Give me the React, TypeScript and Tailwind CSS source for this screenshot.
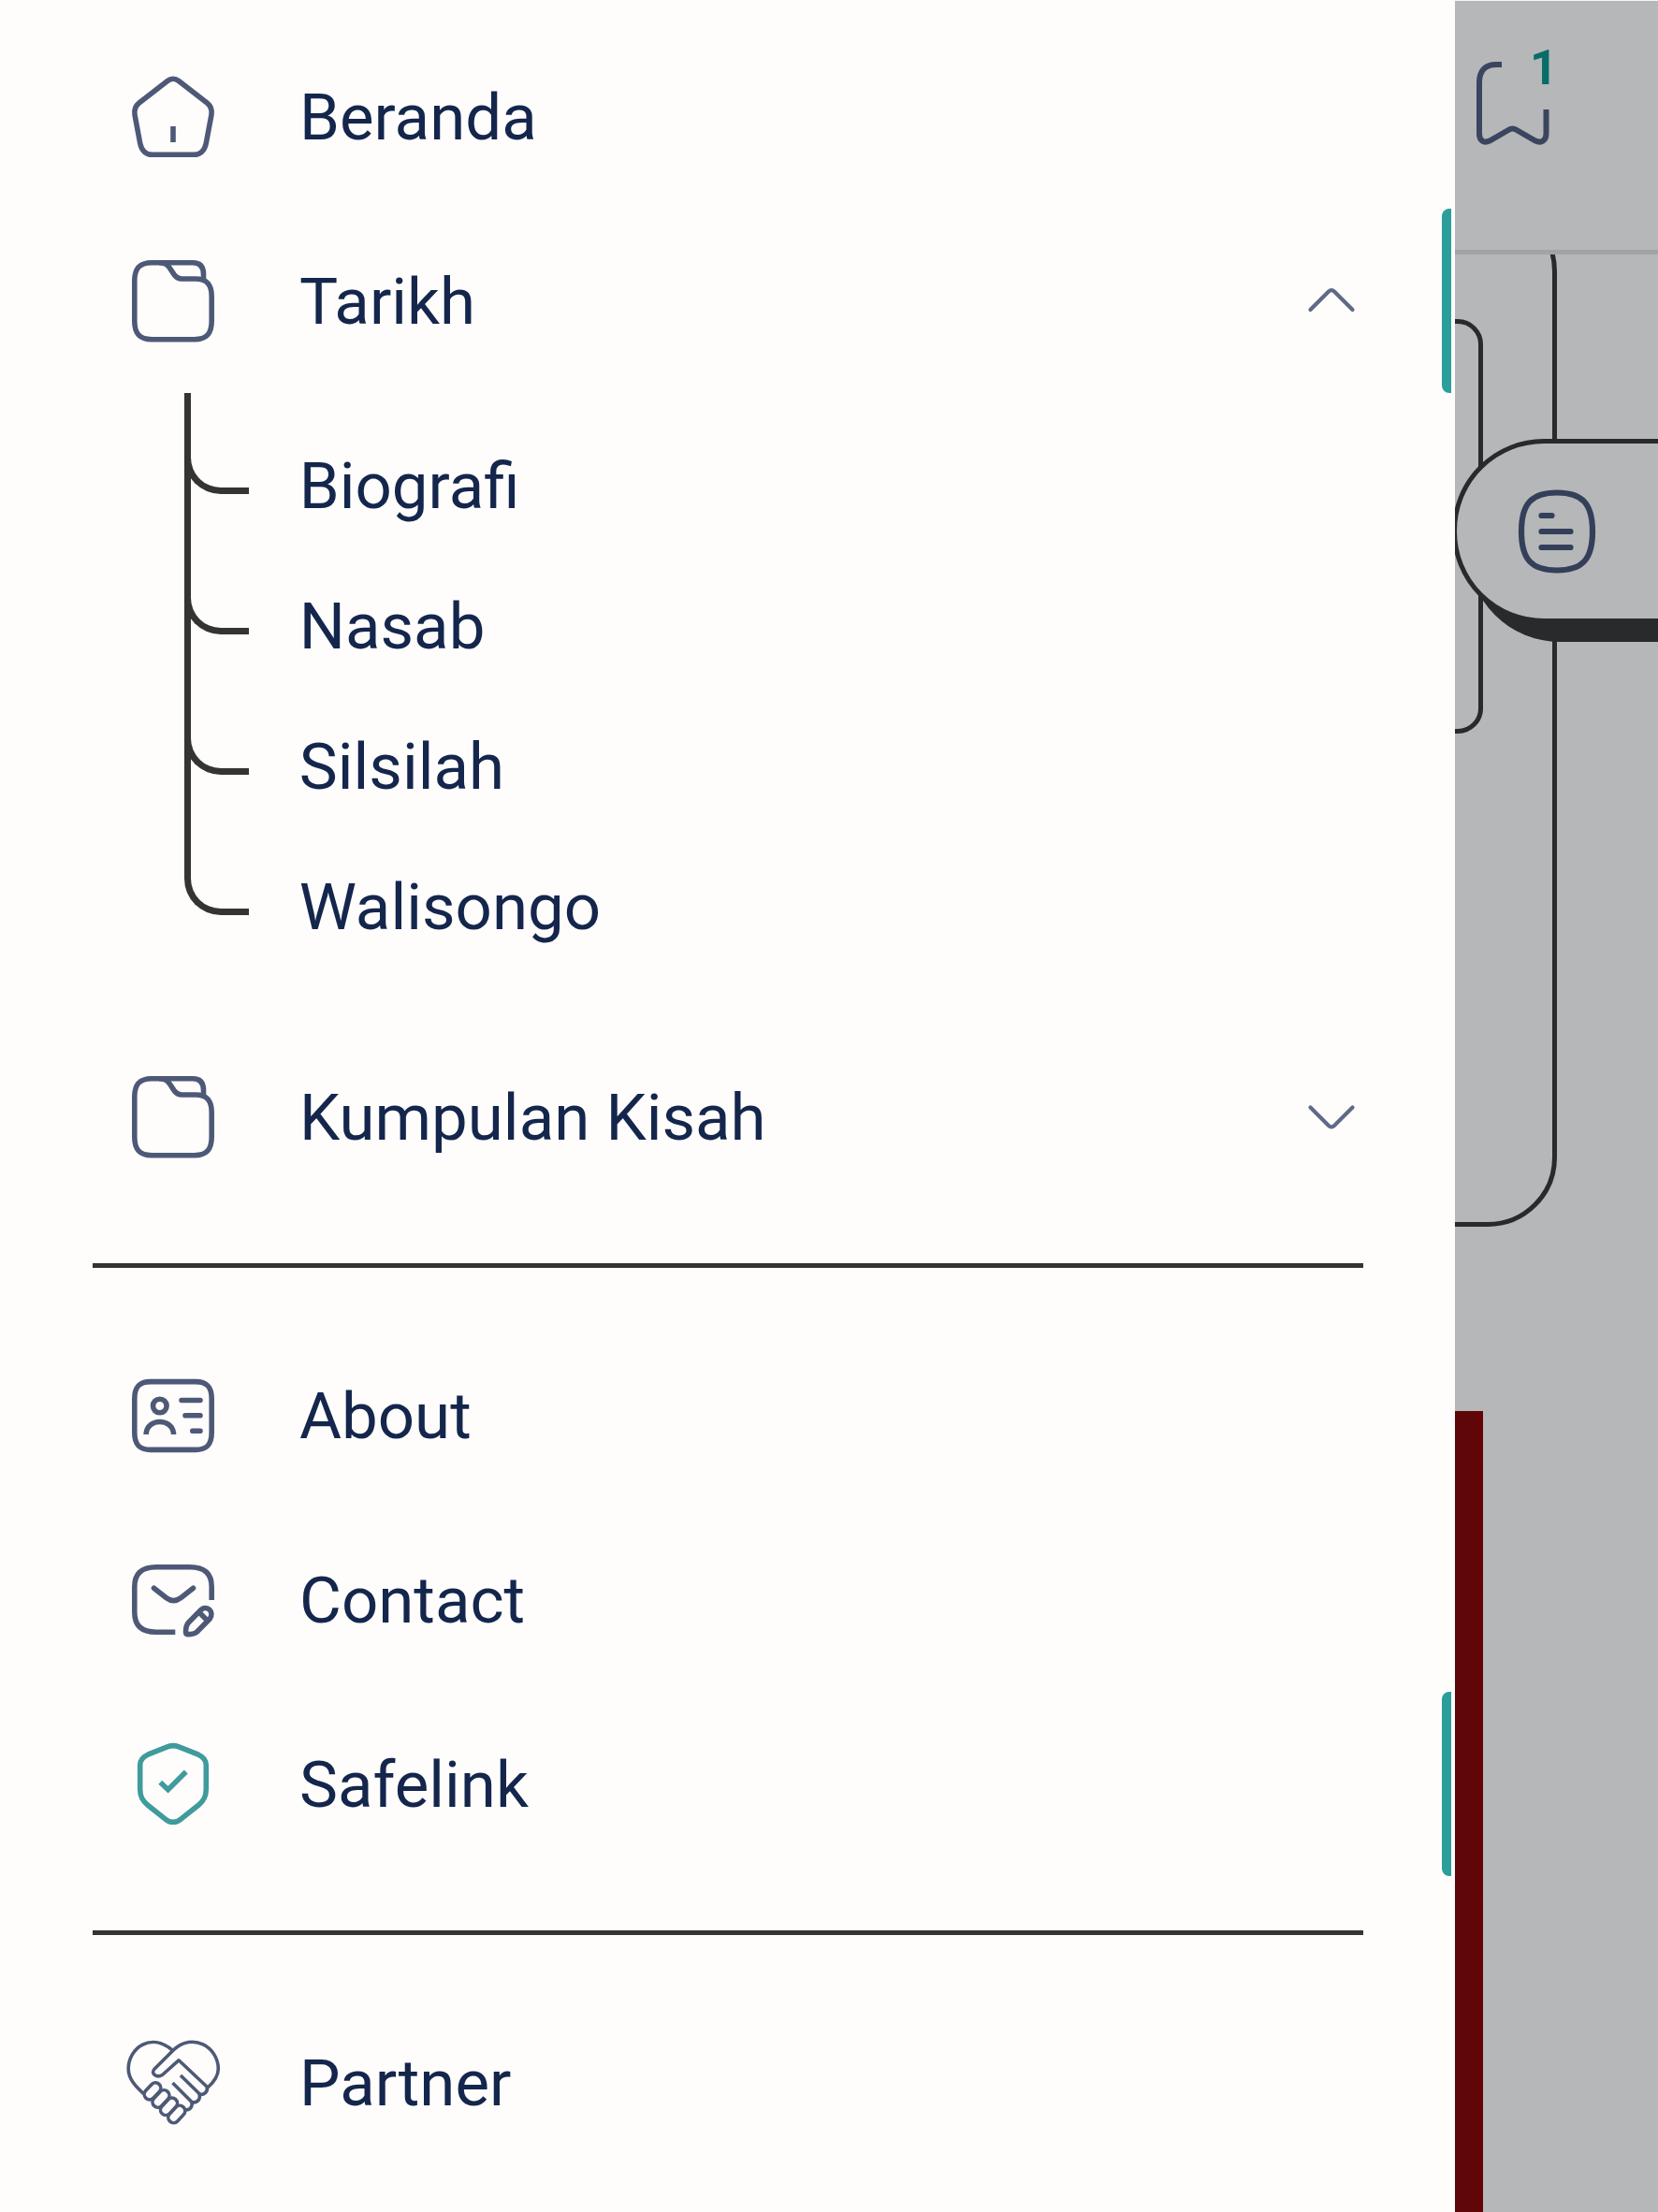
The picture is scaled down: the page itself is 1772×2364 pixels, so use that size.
import type { ReactNode } from "react";

function Icon({ children, color = "text-[#4d5976]", width = 5.6 }: { children: ReactNode; color?: string; width?: number }) {
  return (
    <svg viewBox="0 0 118 118" className={`size-[118px] shrink-0 ${color}`} fill="none" stroke="currentColor" strokeWidth={width}>
      {children}
    </svg>
  );
}

const HomeIcon = () => (
  <Icon>
    <path d="M53 20.5C56.5 17.7 61.5 17.7 65 20.5L95 43.8C98.8 46.8 101 50.5 100 56.5L94.3 87C92.6 95.5 87.5 99.3 81.5 99.3H36.5C30.5 99.3 25.4 95.5 23.7 87L18 56.5C17 50.5 19.2 46.8 23 43.8Z" />
    <path d="M59 69V86" />
  </Icon>
);

const FolderIcon = () => (
  <Icon>
    <path d="M45 17.7H36C23 17.7 17.8 24 17.8 37V80C17.8 93.5 23 99.7 36 99.7H82C95 99.7 100.2 93.5 100.2 80V54C100.2 41 95 35 83 35H68C64.5 35 62.8 34 60.5 31L55.5 23.5C53 19.3 50 17.7 44 17.7" />
    <path d="M44 17.7H80C88 17.7 91.5 22 91.5 30V37" />
  </Icon>
);

const IdCardIcon = () => (
  <Icon>
    <path d="M35 22.6H83C95 22.6 100.2 28 100.2 41V77C100.2 90 95 95.4 83 95.4H35C23 95.4 17.8 90 17.8 77V41C17.8 28 23 22.6 35 22.6Z" />
    <circle cx="44.8" cy="48.5" r="7.3" />
    <path d="M30.2 79V77.5C32 61.5 57.6 61.5 59.5 77.5V79" />
    <path strokeLinecap="round" d="M68 42.5H88M72 58.8H88M79.8 75.2H88" />
  </Icon>
);

const MailIcon = () => (
  <Icon>
    <path d="M61.3 93.3H41C25 93.3 17.8 86 17.8 72V45C17.8 31 25 23.8 41 23.8H77C93 23.8 100.2 31 100.2 45V59" />
    <path strokeLinecap="round" d="M38.5 46.3L51.5 56.5Q59.5 62.6 67.5 56.5L80.5 46.3" />
    <path strokeLinejoin="round" d="M75.5 83L89 69.3C95 64 103.5 71.5 98.3 79L84.5 93C82 95.3 79 95.6 74.5 95.6C72.5 95.6 72.5 94.5 72.5 93C72.5 88 73.2 85.5 75.5 83Z" />
    <path d="M86.5 71.8L96 81.2" />
  </Icon>
);

const ShieldIcon = () => (
  <Icon color="text-[#3f9b9c]">
    <path d="M53.5 18.7C57 17.3 61 17.3 64.5 18.7L86 27.2C91.5 29.6 94.3 32.5 94.3 38.5V64C94.3 72 92 76.5 86 81.2L67 96.3C62.5 100.3 55.5 100.3 51 96.3L32 81.2C26 76.5 23.7 72 23.7 64V38.5C23.7 32.5 26.5 29.6 32 27.2Z" />
    <path d="M45.3 56.7L53.6 64.7L72.8 45.5" />
  </Icon>
);

const PartnerIcon = () => (
  <Icon width={3.6}>
    <path d="M58.5 24.3C35 4 11.2 22 11.2 44C11.2 54.5 18.5 62.5 28 71" />
    <path strokeLinejoin="round" d="M95.5 64.5C104 57 107.3 50.5 107.3 44C107.3 21 80 4 59 24.3L39 44.3C34.5 49 41.5 54 47.5 50.5L65 34.8L95 63C97 68.5 91.5 72.5 87 71C89 77 83.5 81 79 79.5C80 85.5 76 89 70.5 87.5" />
    <path d="M67 51L88 71.5M58.5 59L79.5 80" />
    <rect x="26.8" y="62.2" width="20.5" height="11.4" rx="5.7" transform="rotate(-47 37 67.9)" />
    <rect x="35.5" y="70.3" width="21" height="11.4" rx="5.7" transform="rotate(-47 46 76)" />
    <rect x="44" y="78.6" width="21" height="11.4" rx="5.7" transform="rotate(-47 54.5 84.3)" />
    <rect x="52.3" y="86.8" width="21" height="11.4" rx="5.7" transform="rotate(-47 62.8 92.5)" />
  </Icon>
);

function Chevron({ open }: { open: boolean }) {
  return (
    <svg viewBox="0 0 56 34" className="mr-[104.5px] mb-[3px] h-[34px] w-[56px] text-[#5f6a85]" fill="none" stroke="currentColor" strokeWidth="4.2" strokeLinecap="round">
      {open ? <path d="M5.5 28L25 8.5Q28 5.7 31 8.5L50.5 28" /> : <path d="M5.5 8.5L25 28Q28 30.8 31 28L50.5 8.5" />}
    </svg>
  );
}

function Item({ icon, label, open, marked }: { icon: ReactNode; label: string; open?: boolean; marked?: boolean }) {
  return (
    <div className="relative flex h-[197px] items-center pl-[125.5px]">
      {icon}
      <span className="ml-[76.5px] flex-1 pt-0.5">{label}</span>
      {open !== undefined && <Chevron open={open} />}
      {marked && <span className="absolute top-0 right-[4.5px] h-full w-2.5 rounded-l-[8px] bg-[#2b9e9c]" />}
    </div>
  );
}

function SubItem({ label, last }: { label: string; last?: boolean }) {
  return (
    <li className="relative flex h-[150px] items-center pl-[319.75px]">
      <span className="absolute -top-[24px] left-[197px] h-[108px] w-[69px] rounded-bl-[39px] border-b-[7px] border-l-[7px] border-[#343432]" />
      {!last && <span className="absolute -top-[24px] left-[197px] h-[160px] w-[7px] bg-[#343432]" />}
      {label}
    </li>
  );
}

const Divider = () => <hr className="mt-[58px] mb-[59px] ml-[98.5px] w-[1358.5px] border-0 border-t-[5px] border-[#343432]" />;

function Sidebar() {
  return (
    <aside className="w-[1555px] shrink-0 bg-[#fefdfc] pt-[26px] text-[69px] leading-none text-[#14264c]">
      <nav>
        <Item icon={<HomeIcon />} label="Beranda" />
        <Item icon={<FolderIcon />} label="Tarikh" open marked />
        <ul className="mt-6 mb-[51px]">
          <SubItem label="Biografi" />
          <SubItem label="Nasab" />
          <SubItem label="Silsilah" />
          <SubItem label="Walisongo" last />
        </ul>
        <Item icon={<FolderIcon />} label="Kumpulan Kisah" open={false} />
        <Divider />
        <Item icon={<IdCardIcon />} label="About" />
        <Item icon={<MailIcon />} label="Contact" />
        <Item icon={<ShieldIcon />} label="Safelink" marked />
        <Divider />
        <Item icon={<PartnerIcon />} label="Partner" />
      </nav>
    </aside>
  );
}

function DimmedPage() {
  return (
    <main className="relative h-full flex-1 overflow-hidden border-t border-[#f4f5f5] bg-[#b5b7b8]">
      <header className="relative z-10 h-[271px] border-b-[5px] border-[#a1a3a4] bg-[#b5b7b8] pt-[62px] pl-[20px]">
        <svg viewBox="0 0 84 96" className="h-24 w-[84px]" fill="none" stroke="#3b455f" strokeWidth="6">
          <path d="M30 6H24C12 6 6 13 6 25V80C6 87 10.5 90.5 17 87.5L37 76Q41.5 73 46 76L66 87.5C72.5 90.5 77.5 87 77.5 80V54" />
        </svg>
        <span className="absolute top-[41px] left-[80px] text-[52px] leading-[61px] font-bold text-[#086c68]">1</span>
      </header>
      <section className="-mt-[56px] -ml-[200px] h-[1095px] w-[309px] rounded-[74px] border-[5px] border-[#282a2b] pt-[120px]">
        <div className="h-[443px] w-[225px] rounded-[27px] border-[5px] border-[#282a2b]" />
      </section>
      <div className="mt-[197px] h-[857px] w-[30px] bg-linear-to-r from-[#5f0708] from-70% to-[#680004]" />
      <button className="absolute top-[468px] -left-[3px] flex h-[197px] w-[320px] items-center rounded-[98px] border-[5px] border-[#282a2b] bg-[#b5b7b8] pl-[61px] shadow-[17px_20px_0_#282a2b]">
        <svg viewBox="0 0 92 96" className="h-24 w-[92px]" fill="none" stroke="#343f5a" strokeWidth="6.2">
          <path d="M46 6.5C73 6.5 84 18 84 48C84 78 73 89.5 46 89.5C19 89.5 8 78 8 48C8 18 19 6.5 46 6.5Z" />
          <path strokeLinecap="round" d="M29.5 31H40.5M29.5 48H60.5M29.5 65H60.5" />
        </svg>
      </button>
    </main>
  );
}

export default function App() {
  return (
    <div className="flex h-[2364px] w-[1772px] overflow-hidden font-['Roboto',sans-serif]">
      <Sidebar />
      <DimmedPage />
    </div>
  );
}
